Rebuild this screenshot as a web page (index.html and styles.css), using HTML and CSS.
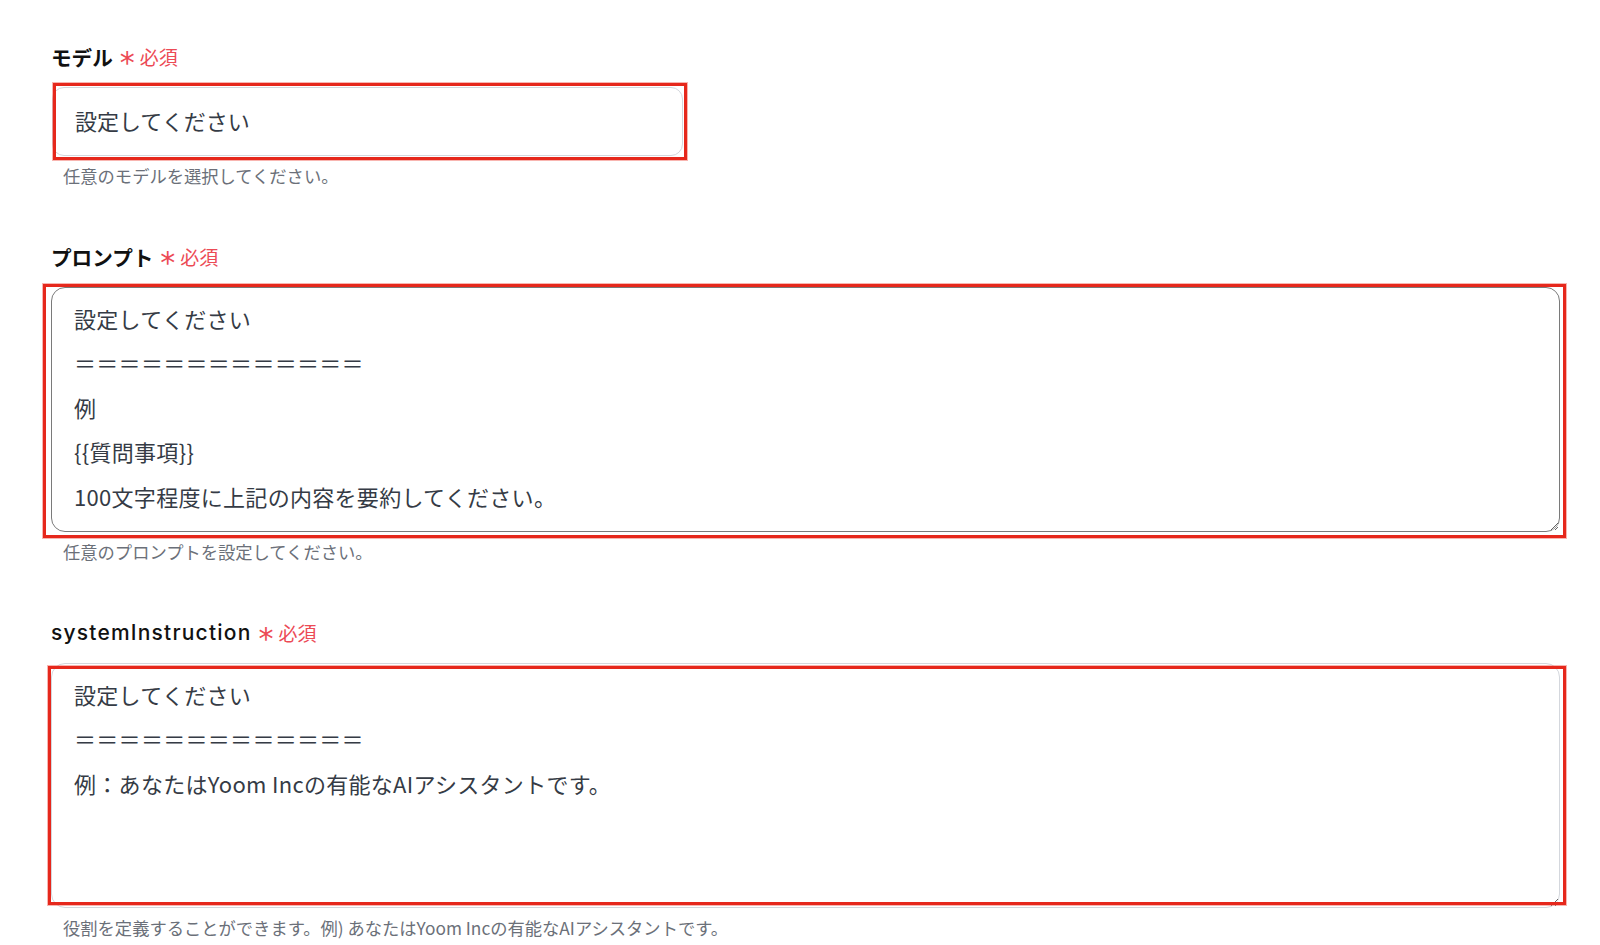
FILE: index.html
```html
<!DOCTYPE html>
<html lang="ja">
<head>
<meta charset="utf-8">
<title>設定</title>
<link rel="stylesheet" href="styles.css">
</head>
<body>
<div class="form">
  <div class="field">
    <div class="label"><span class="label-text">モデル</span><span class="req"><span class="ast">*</span>必須</span></div>
    <div class="control mark mark-model">
      <div class="select">設定してください</div>
    </div>
    <div class="help">任意のモデルを選択してください。</div>
  </div>

  <div class="field">
    <div class="label"><span class="label-text">プロンプト</span><span class="req"><span class="ast">*</span>必須</span></div>
    <div class="control mark mark-prompt">
      <textarea class="area area-dark" readonly>設定してください
＝＝＝＝＝＝＝＝＝＝＝＝＝
例
{{質問事項}}
100文字程度に上記の内容を要約してください。</textarea>
    </div>
    <div class="help">任意のプロンプトを設定してください。</div>
  </div>

  <div class="field">
    <div class="label"><span class="label-text latin">systemInstruction</span><span class="req"><span class="ast">*</span>必須</span></div>
    <div class="control mark mark-system">
      <textarea class="area" readonly>設定してください
＝＝＝＝＝＝＝＝＝＝＝＝＝
例：あなたはYoom Incの有能なAIアシスタントです。</textarea>
    </div>
    <div class="help">役割を定義することができます。例) あなたはYoom Incの有能なAIアシスタントです。</div>
  </div>
</div>
</body>
</html>
```

FILE: styles.css
```css
html, body {
  margin: 0;
  padding: 0;
  background: #ffffff;
}

body {
  font-family: "Noto Sans CJK JP", "Noto Sans", sans-serif;
  color: #333a44;
}

.form {
  padding: 42px 40px 0 51px;
  display: flex;
  flex-direction: column;
  gap: 54px;
}

.field {
  display: flex;
  flex-direction: column;
}

.label {
  display: flex;
  align-items: center;
  height: 30px;
  margin-bottom: 15px;
}

.label-text {
  font-size: 20.6px;
  font-weight: 700;
  color: #111111;
  line-height: 30px;
}

.label-text.latin {
  font-family: Inter, "Noto Sans CJK JP", sans-serif;
  font-size: 21px;
  font-weight: 500;
  letter-spacing: 1.2px;
}

.req {
  display: inline-flex;
  align-items: center;
  margin-left: 7px;
  color: #ec4a55;
  font-size: 19px;
  line-height: 30px;
}

.ast {
  font-family: "DejaVu Sans", sans-serif;
  font-size: 30px;
  font-weight: 400;
  margin-right: 5px;
  position: relative;
  top: 6px;
}

.control {
  position: relative;
}

.mark::after {
  content: "";
  position: absolute;
  border: 3px solid #e6281c;
  box-shadow: 0 0 0 1px rgba(240, 90, 80, 0.45);
  pointer-events: none;
}

.mark-model {
  width: 631px;
  margin-left: 1px;
}

.mark-model::after {
  left: 1px;
  top: -4px;
  right: -4px;
  bottom: -4px;
}

.mark-prompt::after {
  left: -8px;
  top: -3px;
  right: -6px;
  bottom: -6px;
}

.mark-system::after {
  left: -3px;
  top: 3px;
  right: -6px;
  bottom: 3px;
}

.select {
  box-sizing: border-box;
  height: 69px;
  border: 1px solid #d4d7dd;
  border-radius: 12px;
  display: flex;
  align-items: center;
  padding-left: 22px;
  padding-bottom: 4px;
  font-size: 22px;
  color: #353b45;
  background: #fff;
}

.area {
  display: block;
  box-sizing: border-box;
  width: 100%;
  margin: 0;
  border: 1px solid #d4d7dd;
  border-radius: 14px;
  padding: 8px 22px;
  font-family: "Noto Sans CJK JP", "Noto Sans", sans-serif;
  font-size: 22px;
  letter-spacing: 0.3px;
  line-height: 44.4px;
  color: #353b45;
  background: #fff;
  resize: vertical;
  outline: none;
  overflow: hidden;
  height: 245px;
}

.area-dark {
  border-color: #7a7a7a;
}

.help {
  margin-top: 8px;
  padding-left: 12px;
  font-size: 17.3px;
  line-height: 24px;
  color: #6b7079;
}
```
